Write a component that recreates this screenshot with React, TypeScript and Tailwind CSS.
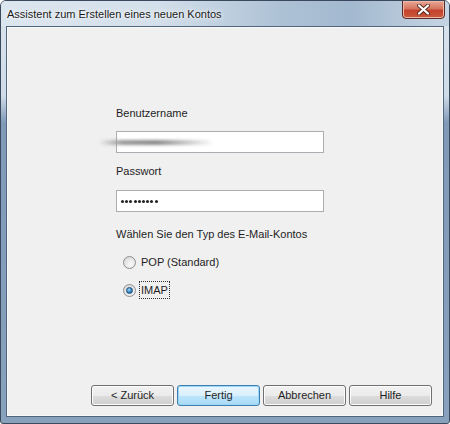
import React from 'react';

const font = { fontFamily: '"Liberation Sans", Arial, sans-serif' };

function Radio({ checked }: { checked?: boolean }) {
  return (
    <span className="flex h-[13px] w-[13px] items-center justify-center rounded-full border border-[#8f8f8f] bg-[radial-gradient(circle_at_60%_65%,#fbfbfb_0%,#e4e4e4_55%,#cfcfcf_100%)]">
      {checked && (
        <span className="h-[7px] w-[7px] rounded-full border border-[#1d4f7a] bg-[radial-gradient(circle_at_40%_35%,#a6d8f7_0%,#2f84c4_55%,#144a78_100%)]" />
      )}
    </span>
  );
}

function WinButton({ label, primary }: { label: string; primary?: boolean }) {
  return (
    <button
      className={`h-[21px] w-[83px] rounded-[3px] border text-[11px] leading-none text-[#1e1e1e] ${
        primary
          ? 'border-[#3c7fb1] bg-[linear-gradient(to_bottom,#eaf6fd_0%,#d9f0fc_50%,#bee6fd_51%,#a7d9f5_100%)] shadow-[inset_0_0_0_1px_#9ed6f5]'
          : 'border-[#707070] bg-[linear-gradient(to_bottom,#f2f2f2_0%,#ebebeb_50%,#dddddd_51%,#cfcfcf_100%)] shadow-[inset_0_0_0_1px_#fcfcfc]'
      }`}
    >
      {label}
    </button>
  );
}

export default function App() {
  return (
    <div
      style={font}
      className="flex h-[424px] w-[450px] flex-col overflow-hidden rounded-t-[6px] rounded-b-[3px] border border-[#3a4a5c] bg-[linear-gradient(to_bottom,#dbe5ef_0px,#cfdbe7_95px,#7f99b7_122px,#88a1bd_100%)]"
    >
      {/* title bar */}
      <div className="flex h-[25px] items-start justify-between bg-[linear-gradient(to_right,#dce6ef_0%,#d3dfea_35%,#aec2d6_62%,#a3b9cf_78%,#c6d5e3_100%)] pl-[6px] pr-[4px]">
        <span className="mt-[5px] whitespace-nowrap text-[11px] leading-[16px] text-[#1a1a1a] [text-shadow:0_0_6px_#ffffff,0_0_3px_#ffffff]">
          Assistent zum Erstellen eines neuen Kontos
        </span>
        <div className="mt-[-1px] flex h-[19px] w-[43px] items-center justify-center rounded-b-[4px] border border-[#5a2a24] bg-[linear-gradient(to_bottom,#e8a897_0%,#d6755f_45%,#c4412c_55%,#c85a3e_100%)] shadow-[inset_0_0_0_1px_#eeb7a8]">
          <svg width="13" height="11" viewBox="0 0 13 11">
            <path d="M2 1.5 L11 9.5 M11 1.5 L2 9.5" stroke="#5b2a22" strokeWidth="4" strokeLinecap="round" />
            <path d="M2 1.5 L11 9.5 M11 1.5 L2 9.5" stroke="#ffffff" strokeWidth="2.2" strokeLinecap="round" />
          </svg>
        </div>
      </div>

      {/* client area */}
      <div className="mx-[5px] mb-[6px] flex flex-1 border border-[#51657c]">
        <div className="flex flex-1 flex-col border border-[#f6f8fa] bg-[#f0f0f0]">
          <div className="ml-[108px] mt-[77px] flex w-[208px] flex-col whitespace-nowrap text-[11px] leading-[16px] text-[#1e1e1e]">
            <span>Benutzername</span>
            <div className="relative mt-[10px] h-[22px] border border-[#abadb3] bg-white">
              <div className="absolute left-[-18px] top-[8px] h-[5px] w-[115px] rounded-full bg-[linear-gradient(to_right,rgba(170,170,170,0)_0%,#9a9a9a_20%,#8a8a8a_50%,rgba(160,160,160,0)_100%)] blur-[1.5px]" />
            </div>
            <span className="mt-[10px]">Passwort</span>
            <div className="mt-[11px] flex h-[22px] items-center gap-[1.2px] border border-[#abadb3] bg-white pl-[4px]">
              {Array.from({ length: 9 }).map((_, i) => (
                <span key={i} className="h-[3px] w-[3px] rounded-full bg-[#222]" />
              ))}
            </div>
            <span className="mt-[14px]">Wählen Sie den Typ des E-Mail-Kontos</span>
            <div className="ml-[7px] mt-[11px] flex h-[18px] items-center gap-[5px]">
              <Radio />
              <span>POP (Standard)</span>
            </div>
            <div className="ml-[7px] mt-[10px] flex h-[18px] items-center gap-[3px]">
              <Radio checked />
              <span className="border border-dotted border-[#303030] px-[1px]">IMAP</span>
            </div>
          </div>

          <div className="mb-[9px] mr-[10px] mt-auto flex justify-end gap-[3px]">
            <WinButton label="< Zurück" />
            <WinButton label="Fertig" primary />
            <WinButton label="Abbrechen" />
            <WinButton label="Hilfe" />
          </div>
        </div>
      </div>
    </div>
  );
}
